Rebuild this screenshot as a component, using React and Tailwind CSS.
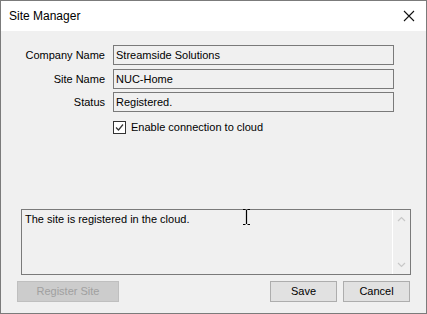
import React from 'react';

const field = 'flex h-[20px] items-center border border-[#7a7a7a] bg-[#f0f0f0] pl-[2px] text-black';

function Row({ label, value, className = '' }) {
	return (
		<div className={`flex items-center ${className}`}>
			<div className="w-[105px] pr-[1px] text-right text-black">{label}</div>
			<div className={`ml-[7px] w-[281px] ${field}`}>{value}</div>
		</div>
	);
}

export default function App() {
	return (
		<div
			className="relative flex h-[314px] w-[427px] flex-col border border-[#7b7b7b] bg-[#f0f0f0] text-[11px]"
			style={{ fontFamily: '"Liberation Sans", Arial, sans-serif' }}
		>
			{/* Title bar */}
			<div className="flex h-[30px] items-center justify-between bg-white pl-[8px] pr-[11px]">
				<span className="text-[12px] text-black">Site Manager</span>
				<svg width="12" height="12" viewBox="0 0 12 12" className="mt-[-1px]">
					<path d="M1 1 L11 11 M11 1 L1 11" stroke="#111" strokeWidth="1.1" />
				</svg>
			</div>

			{/* Form */}
			<div className="flex flex-1 flex-col">
				<Row label="Company Name" value="Streamside Solutions" className="mt-[14px]" />
				<Row label="Site Name" value="NUC-Home" className="mt-[4px]" />
				<Row label="Status" value="Registered." className="mt-[3px]" />

				<div className="ml-[112px] mt-[9px] flex h-[13px] items-center">
					<div className="flex h-[13px] w-[13px] items-center justify-center border border-[#333] bg-white">
						<svg width="9" height="9" viewBox="0 0 9 9">
							<path d="M1 4.5 L3.5 7 L8 1.5" fill="none" stroke="#333" strokeWidth="1.2" />
						</svg>
					</div>
					<span className="ml-[5px] text-black">Enable connection to cloud</span>
				</div>

				{/* Message box */}
				<div className="ml-[20px] mt-[75px] flex h-[66px] w-[390px] border border-[#7a7a7a] bg-[#f0f0f0]">
					<div className="flex-1 pl-[3px] pt-[1px] text-black">The site is registered in the cloud.</div>
					<div className="flex w-[18px] flex-col items-center justify-between border-l border-white py-[6px]">
						<svg width="9" height="6" viewBox="0 0 9 6">
							<path d="M1 5 L4.5 1.5 L8 5" fill="none" stroke="#c8c8c8" strokeWidth="1.2" />
						</svg>
						<svg width="9" height="6" viewBox="0 0 9 6">
							<path d="M1 1 L4.5 4.5 L8 1" fill="none" stroke="#c8c8c8" strokeWidth="1.2" />
						</svg>
					</div>
				</div>

				{/* Buttons */}
				<div className="mt-[6px] flex items-center">
					<button className="ml-[16px] h-[21px] w-[102px] border border-[#bfbfbf] bg-[#cccccc] text-[#a0a0a0]">
						Register Site
					</button>
					<button className="ml-[151px] h-[21px] w-[67px] border border-[#adadad] bg-[#e1e1e1] text-black">
						Save
					</button>
					<button className="ml-[6px] h-[21px] w-[67px] border border-[#adadad] bg-[#e1e1e1] text-black">
						Cancel
					</button>
				</div>
			</div>

			{/* Mouse I-beam cursor */}
			<svg className="absolute left-[241px] top-[207px]" width="9" height="18" viewBox="0 0 9 18">
				<path d="M1 1.5 H3.5 M5.5 1.5 H8 M4.5 2 V16 M1 16.5 H3.5 M5.5 16.5 H8" stroke="#000" strokeWidth="1.2" fill="none" />
			</svg>
		</div>
	);
}
